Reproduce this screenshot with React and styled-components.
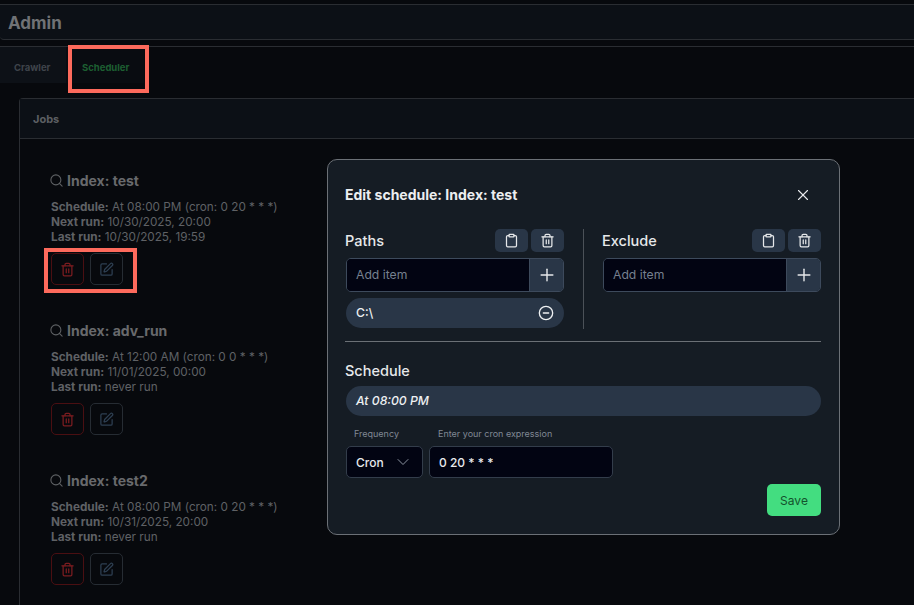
import React from "react";
import styled, { createGlobalStyle } from "styled-components";
import { Search, Trash2, SquarePen, Clipboard, Plus, CircleMinus, X, ChevronDown } from "lucide-react";

const Global = createGlobalStyle`
  html, body { margin: 0; padding: 0; background: #07090d; }
  body { font-family: Inter, "Liberation Sans", sans-serif; overflow: hidden; }
  * { box-sizing: border-box; }
`;

const Page = styled.div`
  position: relative;
  width: 914px;
  height: 605px;
  overflow: hidden;
  background: #07090d;
  padding-top: 4px;
`;
const Header = styled.header`
  height: 36px;
  display: flex;
  align-items: center;
  padding: 2px 0 0 8px;
  background: #0c1016;
  border: 1px solid #2a2d32;
  border-left: 0;
  border-right: 0;
  border-bottom-left-radius: 4px;
`;
const AdminTitle = styled.h1`
  margin: 0;
  font-size: 17px;
  font-weight: 700;
  color: #707275;
`;
const Tabs = styled.nav`
  display: flex;
  margin-top: 6px;
  height: 40px;
  border-top: 1px solid #2a2d32;
`;
const Tab = styled.div`
  width: ${p => (p.$active ? "78px" : "66px")};
  height: 36px;
  padding-left: ${p => (p.$active ? "16px" : "14px")};
  padding-top: 4px;
  display: flex;
  align-items: center;
  font-size: 9.5px;
  font-weight: 700;
  color: ${p => (p.$active ? "#1d5f31" : "#3f444b")};
  background: ${p => (p.$active ? "#090c11" : "#0d1117")};
`;
const Card = styled.section`
  margin: 12px 0 0 19px;
  border: 1px solid #2a2d32;
  border-right: 0;
  border-top-left-radius: 4px;
  height: 560px;
`;
const CardHead = styled.div`
  height: 40px;
  display: flex;
  align-items: center;
  padding-left: 13px;
  font-size: 11px;
  font-weight: 700;
  color: #5c5f63;
  background: #0c1016;
  border-bottom: 1px solid #2a2d32;
`;
const JobList = styled.div`
  padding: 31px 0 0 31px;
  display: flex;
  flex-direction: column;
  gap: 30px;
`;
const Job = styled.article`
  height: 120px;
`;
const JobTitle = styled.h3`
  margin: 0 0 10px;
  height: 20px;
  display: flex;
  align-items: center;
  gap: 3px;
  font-size: 14px;
  font-weight: 700;
  color: #68696c;
  svg { color: #5f6265; margin-left: -2px; }
`;
const Line = styled.div`
  font-size: 11.75px;
  line-height: 15px;
  color: #5f6165;
  b { font-weight: 700; }
`;
const Actions = styled.div`
  display: flex;
  gap: 6px;
  margin-top: 8px;
`;
const IconBtn = styled.button`
  width: 33px;
  height: 32px;
  padding: 0;
  display: flex;
  align-items: center;
  justify-content: center;
  background: transparent;
  border-radius: 5px;
  border: 1px solid ${p => (p.$danger ? "#4a0f12" : "#262c33")};
  color: ${p => (p.$danger ? "#7c1d20" : "#2e3f52")};
`;
const Highlight = styled.div`
  position: absolute;
  border: 4px solid #fd6a5c;
  left: ${p => p.$x}px;
  top: ${p => p.$y}px;
  width: ${p => p.$w}px;
  height: ${p => p.$h}px;
`;
const Modal = styled.div`
  position: absolute;
  left: 327px;
  top: 159px;
  width: 513px;
  height: 376px;
  padding: 0 18px 0 17px;
  background: #151c24;
  border: 1px solid #6b7076;
  border-radius: 10px;
  color: #e8eaed;
`;
const ModalHead = styled.div`
  height: 69px;
  display: flex;
  align-items: center;
  justify-content: space-between;
  padding-right: 9px;
`;
const ModalTitle = styled.h2`
  margin: 0;
  font-size: 14px;
  font-weight: 700;
  color: #eceef0;
`;
const Columns = styled.div`
  display: flex;
  height: 100px;
`;
const Column = styled.div`
  width: 219px;
  display: flex;
  flex-direction: column;
`;
const VDivider = styled.div`
  width: 1px;
  margin: 0 18px 0 19px;
  background: #4b5158;
`;
const ColHead = styled.div`
  height: 23px;
  display: flex;
  align-items: center;
  justify-content: space-between;
`;
const Label = styled.span`
  font-size: 14.5px;
  font-weight: 500;
  color: #e6e8ea;
`;
const SmallBtns = styled.div`
  display: flex;
  gap: 3px;
`;
const SmallBtn = styled.button`
  width: 33px;
  height: 23px;
  padding: 0;
  border: 0;
  border-radius: 5px;
  background: #293647;
  color: #e6e8ea;
  display: flex;
  align-items: center;
  justify-content: center;
`;
const InputRow = styled.div`
  display: flex;
  height: 34px;
  margin-top: 6px;
  margin-left: 1px;
  border: 1px solid #3d4a5c;
  border-radius: 5px;
  overflow: hidden;
`;
const AddField = styled.div`
  flex: 1;
  display: flex;
  align-items: center;
  padding-left: 9px;
  padding-bottom: 1px;
  font-size: 12.2px;
  color: #76808f;
  background: #020412;
`;
const AddBtn = styled.div`
  width: 34px;
  display: flex;
  align-items: center;
  justify-content: center;
  background: #293647;
  border-left: 1px solid #3d4a5c;
  color: #e6e8ea;
`;
const Pill = styled.div`
  height: 30px;
  margin-top: 6px;
  margin-left: 1px;
  padding: 0 10px 1px;
  border-radius: 15px;
  display: flex;
  align-items: center;
  justify-content: space-between;
  background: #293647;
  font-size: 12.2px;
  font-weight: ${p => (p.$bold ? 500 : 400)};
  font-style: ${p => (p.$italic ? "italic" : "normal")};
  color: #eef0f2;
`;
const HDivider = styled.div`
  height: 1px;
  margin-top: 12px;
  background: #6b7076;
`;
const SchedLabel = styled(Label)`
  display: block;
  margin-top: 20px;
  line-height: 18px;
`;
const Fields = styled.div`
  display: flex;
  gap: 6px;
  margin: 12px 0 0 1px;
`;
const Field = styled.div`
  width: ${p => p.$w}px;
  display: flex;
  flex-direction: column;
`;
const FieldLabel = styled.label`
  height: 18px;
  padding-left: ${p => p.$pad}px;
  font-size: 9px;
  line-height: 12px;
  color: #808894;
`;
const Control = styled.div`
  height: 32px;
  padding: 0 9px;
  display: flex;
  align-items: center;
  justify-content: space-between;
  background: #020412;
  border: 1px solid #333d4b;
  border-radius: 5px;
  font-size: 12px;
  font-weight: 500;
  color: #e8eaed;
  svg { color: #8b93a0; flex: none; }
`;
const Footer = styled.div`
  display: flex;
  justify-content: flex-end;
  margin-top: 6px;
`;
const SaveBtn = styled.button`
  width: 54px;
  height: 32px;
  border: 0;
  border-radius: 5px;
  background: #43dd80;
  color: #14532d;
  font-family: inherit;
  font-size: 12px;
`;

const jobs = [
  { name: "test", sched: "At 08:00 PM (cron: 0 20 * * *)", next: "10/30/2025, 20:00", last: "10/30/2025, 19:59" },
  { name: "adv_run", sched: "At 12:00 AM (cron: 0 0 * * *)", next: "11/01/2025, 00:00", last: "never run" },
  { name: "test2", sched: "At 08:00 PM (cron: 0 20 * * *)", next: "10/31/2025, 20:00", last: "never run" },
];

const ListColumn = ({ title, children }) => (
  <Column>
    <ColHead>
      <Label>{title}</Label>
      <SmallBtns>
        <SmallBtn><Clipboard size={15} /></SmallBtn>
        <SmallBtn><Trash2 size={15} /></SmallBtn>
      </SmallBtns>
    </ColHead>
    <InputRow>
      <AddField>Add item</AddField>
      <AddBtn><Plus size={20} strokeWidth={1.7} /></AddBtn>
    </InputRow>
    {children}
  </Column>
);

export default function App() {
  return (
    <Page>
      <Global />
      <Header><AdminTitle>Admin</AdminTitle></Header>
      <Tabs>
        <Tab>Crawler</Tab>
        <Tab $active>Scheduler</Tab>
      </Tabs>
      <Card>
        <CardHead>Jobs</CardHead>
        <JobList>
          {jobs.map(j => (
            <Job key={j.name}>
              <JobTitle><Search size={15} strokeWidth={1.7} />Index: {j.name}</JobTitle>
              <Line><b>Schedule:</b> {j.sched}</Line>
              <Line><b>Next run:</b> {j.next}</Line>
              <Line><b>Last run:</b> {j.last}</Line>
              <Actions>
                <IconBtn $danger><Trash2 size={15} /></IconBtn>
                <IconBtn><SquarePen size={15} /></IconBtn>
              </Actions>
            </Job>
          ))}
        </JobList>
      </Card>
      <Highlight $x={68} $y={45} $w={81} $h={48} />
      <Highlight $x={44} $y={248} $w={93} $h={45} />
      <Modal>
        <ModalHead>
          <ModalTitle>Edit schedule: Index: test</ModalTitle>
          <X size={18} strokeWidth={1.5} />
        </ModalHead>
        <Columns>
          <ListColumn title="Paths">
            <Pill $bold>C:\<CircleMinus size={16} /></Pill>
          </ListColumn>
          <VDivider />
          <ListColumn title="Exclude" />
        </Columns>
        <HDivider />
        <SchedLabel>Schedule</SchedLabel>
        <Pill $italic $bold>At 08:00 PM</Pill>
        <Fields>
          <Field $w={77}>
            <FieldLabel $pad={8}>Frequency</FieldLabel>
            <Control>Cron<ChevronDown size={20} strokeWidth={1.2} /></Control>
          </Field>
          <Field $w={184}>
            <FieldLabel $pad={9}>Enter your cron expression</FieldLabel>
            <Control>0 20 * * *</Control>
          </Field>
        </Fields>
        <Footer><SaveBtn>Save</SaveBtn></Footer>
      </Modal>
    </Page>
  );
}
